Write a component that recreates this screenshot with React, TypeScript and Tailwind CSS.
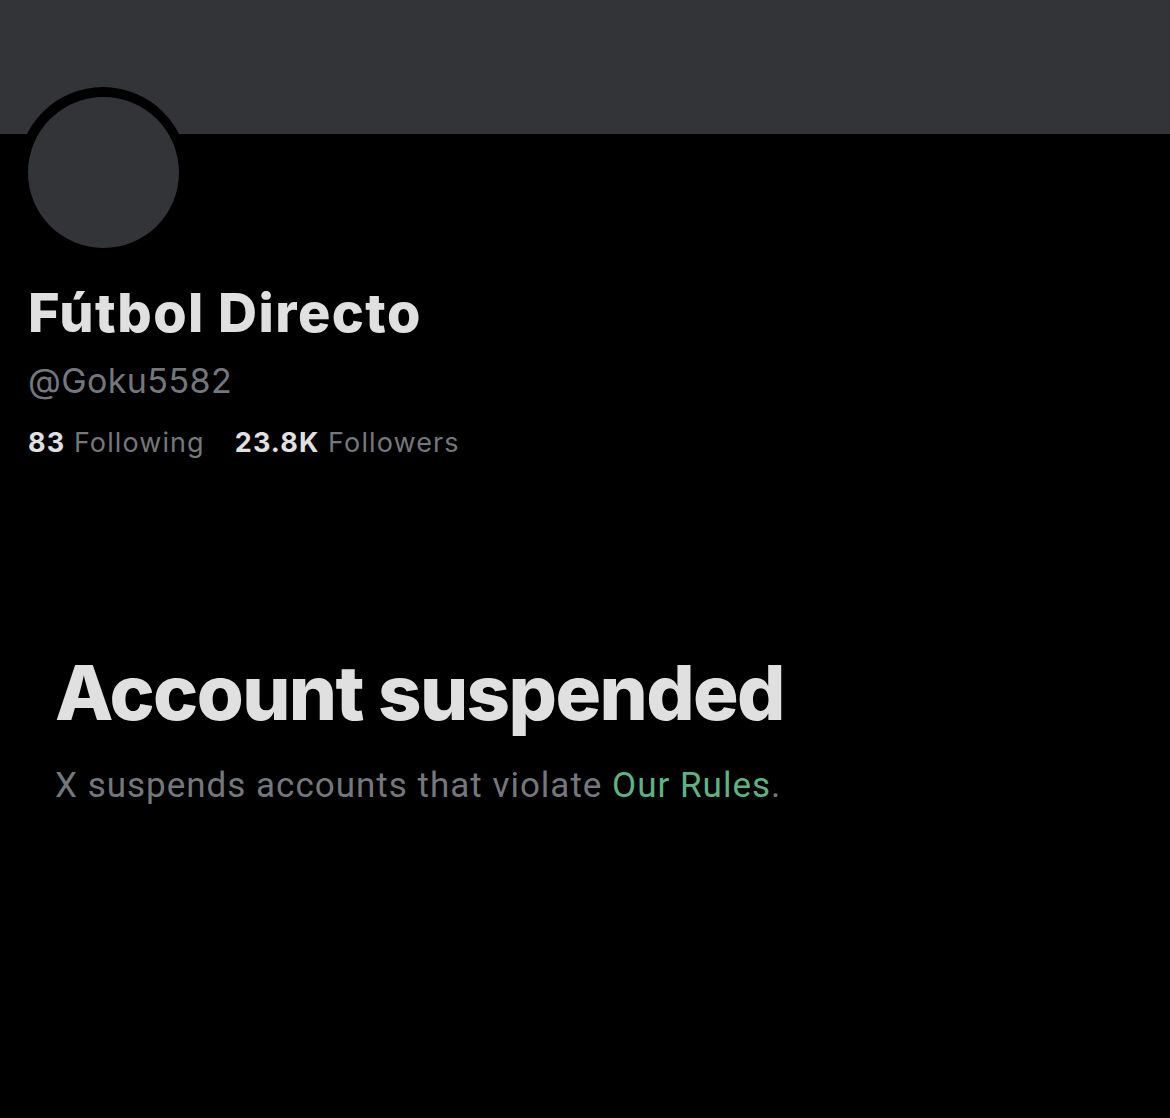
export default function App() {
  return (
    <div className="w-[1170px] h-[1118px] bg-black overflow-hidden relative" style={{ fontFamily: 'Inter, "Noto Sans", sans-serif' }}>
      <div className="h-[134px] bg-[#333438]" />
      <div className="absolute left-[18px] top-[87px] w-[170px] h-[170px] rounded-full bg-black flex items-center justify-center">
        <div className="w-[151px] h-[151px] rounded-full bg-[#333438]" />
      </div>
      <div className="pl-[28px] pt-[147px]">
        <div className="text-[54px] leading-[64px] font-extrabold text-[#e0e0e0] tracking-[1.45px]">Fútbol Directo</div>
        <div className="mt-[16px] text-[34px] leading-[40px] text-[#74777c] tracking-[0.4px]">@Goku5582</div>
        <div className="mt-[26px] text-[27px] leading-[32px] text-[#74777c] flex gap-[30px] tracking-[1.1px]">
          <span><span className="font-bold text-[#e0e0e0]">83</span> Following</span>
          <span><span className="font-bold text-[#e0e0e0]">23.8K</span> Followers</span>
        </div>
      </div>
      <div className="pl-[55px] pt-[191px]">
        <div className="text-[76px] leading-[84px] font-extrabold text-[#e0e0e0] tracking-[-1.6px]">Account suspended</div>
        <div className="mt-[31px] text-[35px] leading-[42px] text-[#74777c] tracking-[1px]" style={{ fontFamily: 'Roboto, sans-serif' }}>
          X suspends accounts that violate <span className="text-[#5fb383]">Our Rules</span>.
        </div>
      </div>
    </div>
  );
}
